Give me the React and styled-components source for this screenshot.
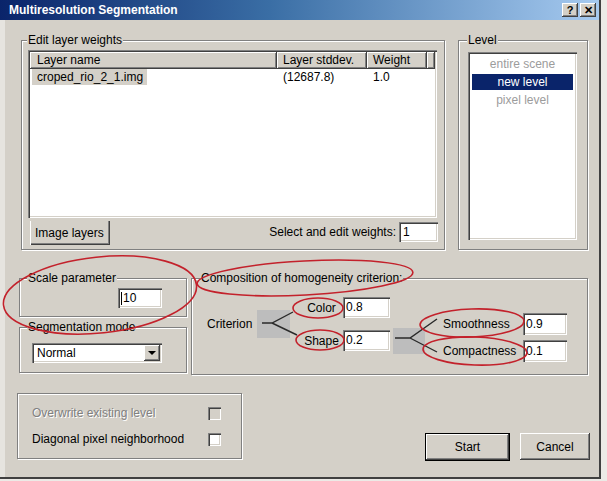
import styled, { createGlobalStyle } from "styled-components";

const GlobalStyle = createGlobalStyle`
  html, body { margin: 0; padding: 0; background: #e9e7e3; }
  body { font-family: "Liberation Sans", Arial, sans-serif; font-size: 12px; color: #000; }
  * { box-sizing: border-box; }
`;

const face = "#d4d0c8";
const raised = `box-shadow: inset -1px -1px #404040, inset 1px 1px #fff, inset -2px -2px #808080, inset 2px 2px ${face};`;
const sunken = `box-shadow: inset 1px 1px #808080, inset 2px 2px #404040, inset -1px -1px #fff, inset -2px -2px ${face};`;

const Root = styled.div`
  position: relative;
  width: 607px;
  height: 481px;
  overflow: hidden;
  background: #eceae6;
`;

const Window = styled.div`
  width: 601px;
  height: 479px;
  background: ${face};
  border-right: 2px solid #404040;
  border-bottom: 2px solid #404040;
  display: flex;
  flex-direction: column;
`;

const TitleBar = styled.div`
  height: 20px;
  display: flex;
  align-items: center;
  padding-left: 9px;
  background: linear-gradient(to right, #0a246a 0%, #3a6ea5 45%, #a6caf0 100%);
  color: #fff;
  font-weight: bold;
  font-size: 12px;
`;

const TitleBtns = styled.div`
  margin-left: auto;
  margin-right: 3px;
  display: flex;
  gap: 2px;
`;

const TitleBtn = styled.div`
  width: 16px;
  height: 14px;
  background: ${face};
  ${raised}
  color: #000;
  font: bold 11px "Liberation Sans", Arial, sans-serif;
  display: flex;
  align-items: center;
  justify-content: center;
`;

const Body = styled.div`
  flex: 1;
  border-left: 5px solid #e6e4df;
  padding-top: 20px;
  display: flex;
  flex-direction: column;
`;

const Row = styled.div`
  display: flex;
  align-items: flex-start;
  padding-left: ${(p) => p.$left}px;
  margin-top: ${(p) => p.$top || 0}px;
`;

const Group = styled.div`
  position: relative;
  width: ${(p) => p.$w}px;
  height: ${(p) => p.$h}px;
  margin-left: ${(p) => p.$ml || 0}px;
  margin-top: ${(p) => p.$mt || 0}px;
  padding: ${(p) => p.$pad || "0"};
  border: 1px solid #808080;
  box-shadow: inset 1px 1px #fff, 1px 1px #fff;
`;

const GroupLabel = styled.span`
  position: absolute;
  top: -8px;
  left: ${(p) => p.$x || 6}px;
  padding: 0 1px;
  background: ${face};
  line-height: 14px;
`;

const Column = styled.div`
  display: flex;
  flex-direction: column;
  gap: ${(p) => p.$gap || 0}px;
`;

/* layer list */
const ListFrame = styled.div`
  width: ${(p) => p.$w}px;
  height: ${(p) => p.$h}px;
  padding: 2px;
  background: #fff;
  ${sunken}
`;

const HeaderRow = styled.div`
  display: flex;
  height: 17px;
`;

const HeaderCell = styled.div`
  width: ${(p) => p.$w}px;
  padding-left: ${(p) => p.$pl || 6}px;
  background: ${face};
  ${raised}
  line-height: 17px;
  white-space: nowrap;
  overflow: hidden;
`;

const DataRow = styled.div`
  display: flex;
  height: 16px;
  line-height: 16px;
`;

const DataCell = styled.div`
  width: ${(p) => p.$w}px;
  padding-left: ${(p) => p.$pl || 6}px;
  white-space: nowrap;
`;

const Picked = styled.span`
  display: inline-block;
  background: ${face};
  padding: 0 4px 0 5px;
`;

const TabRow = styled.div`
  width: 410px;
  height: 25px;
  margin-top: 3px;
  display: flex;
  align-items: flex-start;
`;

const Tab = styled.div`
  width: 80px;
  height: 24px;
  margin-left: 2px;
  padding-left: 5px;
  line-height: 24px;
  background: ${face};
  box-shadow: inset 1px 0 #fff, inset -1px -1px #404040, inset -2px -2px #808080;
`;

const TabHint = styled.span`
  margin-left: auto;
  margin-right: 3px;
  margin-top: 4px;
  line-height: 14px;
`;

/* inputs */
const Field = styled.div`
  width: ${(p) => p.$w}px;
  height: ${(p) => p.$h || 20}px;
  padding-left: ${(p) => p.$pl || 4}px;
  margin-top: ${(p) => p.$mt || 0}px;
  background: #fff;
  ${sunken}
  line-height: ${(p) => p.$h || 20}px;
  display: flex;
  align-items: center;
`;

const Caret = styled.span`
  width: 1px;
  height: 13px;
  background: #000;
  margin-right: 1px;
`;

const Select = styled.div`
  width: 130px;
  height: 20px;
  padding: 2px 2px 2px 5px;
  background: #fff;
  ${sunken}
  display: flex;
  align-items: center;
`;

const SelectBtn = styled.div`
  margin-left: auto;
  width: 16px;
  height: 16px;
  background: ${face};
  ${raised}
  display: flex;
  align-items: center;
  justify-content: center;
  &::after {
    content: "";
    border-left: 4px solid transparent;
    border-right: 4px solid transparent;
    border-top: 4px solid #000;
  }
`;

/* level list */
const LevelItem = styled.div`
  height: 16px;
  margin: 2px 2px 0;
  line-height: 16px;
  text-align: center;
  color: ${(p) => (p.$active ? "#fff" : "#9c9c9c")};
  background: ${(p) => (p.$active ? "#0a246a" : "transparent")};
`;

/* composition */
const Criterion = styled.div`
  width: 50px;
  margin-top: 27px;
  line-height: 14px;
`;

const Branch = styled.svg`
  display: block;
  flex: none;
  margin-top: ${(p) => p.$mt}px;
  margin-left: ${(p) => p.$ml || 0}px;
`;

const Pairs = styled.div`
  display: grid;
  grid-template-columns: ${(p) => p.$cols};
  grid-auto-rows: ${(p) => p.$rowH}px;
  row-gap: ${(p) => p.$gap}px;
  margin-top: ${(p) => p.$mt}px;
  align-items: center;
`;

const PairLabel = styled.span`
  text-align: ${(p) => p.$align || "center"};
  padding-left: ${(p) => p.$pl || 0}px;
`;

/* options */
const OptionRow = styled.div`
  width: 189px;
  height: 16px;
  display: flex;
  align-items: center;
  justify-content: space-between;
`;

const OptionText = styled.span`
  color: ${(p) => (p.$disabled ? "#808080" : "#000")};
  text-shadow: ${(p) => (p.$disabled ? "1px 1px #fff" : "none")};
`;

const Check = styled.div`
  width: 13px;
  height: 13px;
  background: ${(p) => (p.$disabled ? face : "#fff")};
  ${sunken}
`;

const Buttons = styled.div`
  margin-left: auto;
  margin-right: 9px;
  margin-top: 40px;
  display: flex;
  gap: 10px;
  align-items: flex-start;
`;

const Button = styled.div`
  width: ${(p) => p.$w}px;
  height: ${(p) => p.$h}px;
  background: ${face};
  display: flex;
  align-items: center;
  justify-content: center;
  ${(p) =>
    p.$default
      ? `border: 1px solid #000; box-shadow: inset -1px -1px #404040, inset 1px 1px #fff, inset -2px -2px #808080;`
      : raised}
`;

const Marks = styled.svg`
  position: absolute;
  left: 0;
  top: 0;
  pointer-events: none;
`;

const marks = [
  { cx: 100, cy: 295, rx: 97, ry: 38, r: -6 },
  { cx: 305, cy: 278, rx: 108, ry: 17, r: -3 },
  { cx: 318, cy: 308, rx: 25, ry: 10, r: 0 },
  { cx: 320, cy: 340, rx: 24, ry: 10, r: 0 },
  { cx: 472, cy: 323, rx: 52, ry: 14, r: -2 },
  { cx: 475, cy: 351, rx: 52, ry: 14, r: 2 },
];

export default function App() {
  return (
    <Root>
      <GlobalStyle />
      <Window>
        <TitleBar>
          Multiresolution Segmentation
          <TitleBtns>
            <TitleBtn>?</TitleBtn>
            <TitleBtn>✕</TitleBtn>
          </TitleBtns>
        </TitleBar>
        <Body>
          <Row $left={16}>
            <Group $w={424} $h={210} $pad="9px 0 0 6px">
              <GroupLabel $x={5}>Edit layer weights</GroupLabel>
              <ListFrame $w={409} $h={168}>
                <HeaderRow>
                  <HeaderCell $w={247} $pl={7}>Layer name</HeaderCell>
                  <HeaderCell $w={90}>Layer stddev.</HeaderCell>
                  <HeaderCell $w={60}>Weight</HeaderCell>
                  <HeaderCell $w={8} />
                </HeaderRow>
                <DataRow>
                  <DataCell $w={247} $pl={2}>
                    <Picked>croped_rio_2_1.img</Picked>
                  </DataCell>
                  <DataCell $w={90}>(12687.8)</DataCell>
                  <DataCell $w={60}>1.0</DataCell>
                </DataRow>
              </ListFrame>
              <TabRow>
                <Tab>Image layers</Tab>
                <TabHint>Select and edit weights:</TabHint>
                <Field $w={39} $mt={1}>1</Field>
              </TabRow>
            </Group>
            <Group $w={130} $h={210} $ml={13} $pad="11px 0 0 9px">
              <GroupLabel $x={8}>Level</GroupLabel>
              <ListFrame $w={109} $h={188}>
                <LevelItem>entire scene</LevelItem>
                <LevelItem $active>new level</LevelItem>
                <LevelItem>pixel level</LevelItem>
              </ListFrame>
            </Group>
          </Row>

          <Row $left={14} $top={28}>
            <Column $gap={10}>
              <Group $w={168} $h={39} $pad="9px 24px 0 0">
                <GroupLabel $x={7}>Scale parameter</GroupLabel>
                <Row $left={0} style={{ justifyContent: "flex-end" }}>
                  <Field $w={44} $pl={3}>
                    <Caret />
                    10
                  </Field>
                </Row>
              </Group>
              <Group $w={168} $h={46} $pad="15px 0 0 12px">
                <GroupLabel $x={7}>Segmentation mode</GroupLabel>
                <Select>
                  Normal
                  <SelectBtn />
                </Select>
              </Group>
            </Column>
            <Group $w={397} $h={97} $ml={4} $pad="11px 0 0 15px">
              <GroupLabel $x={8}>Composition of homogeneity criterion:</GroupLabel>
              <Row $left={0}>
                <Criterion>Criterion</Criterion>
                <Branch width="43" height="48" $mt={10} viewBox="0 0 43 48">
                  <rect x="0" y="10" width="33" height="28" fill="#bdbdbd" />
                  <path d="M5 23 H15 L36 12 M15 23 L40 35" stroke="#2a2a2a" strokeWidth="1.4" fill="none" />
                </Branch>
                <Pairs $cols="43px 47px" $rowH={21} $gap={12} $mt={7}>
                  <PairLabel>Color</PairLabel>
                  <Field $w={47} $h={21} $pl={3}>0.8</Field>
                  <PairLabel>Shape</PairLabel>
                  <Field $w={47} $h={21} $pl={3}>0.2</Field>
                </Pairs>
                <Branch width="47" height="46" $mt={22} $ml={3} viewBox="0 0 47 46">
                  <rect x="0" y="16" width="32" height="26" fill="#bdbdbd" />
                  <path d="M2 26 H17 L44 7 M17 26 L44 40" stroke="#2a2a2a" strokeWidth="1.4" fill="none" />
                </Branch>
                <Pairs $cols="83px 44px" $rowH={22} $gap={5} $mt={23}>
                  <PairLabel $align="left" $pl={3}>Smoothness</PairLabel>
                  <Field $w={44} $h={22} $pl={3}>0.9</Field>
                  <PairLabel $align="left" $pl={3}>Compactness</PairLabel>
                  <Field $w={44} $h={22} $pl={3}>0.1</Field>
                </Pairs>
              </Row>
            </Group>
          </Row>

          <Row $left={12} $top={18}>
            <Group $w={225} $h={66} $pad="11px 0 0 14px">
              <Column $gap={10}>
                <OptionRow>
                  <OptionText $disabled>Overwrite existing level</OptionText>
                  <Check $disabled />
                </OptionRow>
                <OptionRow>
                  <OptionText>Diagonal pixel neighborhood</OptionText>
                  <Check />
                </OptionRow>
              </Column>
            </Group>
            <Buttons>
              <Button $w={85} $h={28} $default>Start</Button>
              <Button $w={70} $h={27}>Cancel</Button>
            </Buttons>
          </Row>
        </Body>
      </Window>
      <Marks width="607" height="481" viewBox="0 0 607 481">
        {marks.map((m, i) => (
          <ellipse
            key={i}
            cx={m.cx}
            cy={m.cy}
            rx={m.rx}
            ry={m.ry}
            transform={`rotate(${m.r} ${m.cx} ${m.cy})`}
            fill="none"
            stroke="#c3212b"
            strokeWidth="1.6"
          />
        ))}
      </Marks>
    </Root>
  );
}
